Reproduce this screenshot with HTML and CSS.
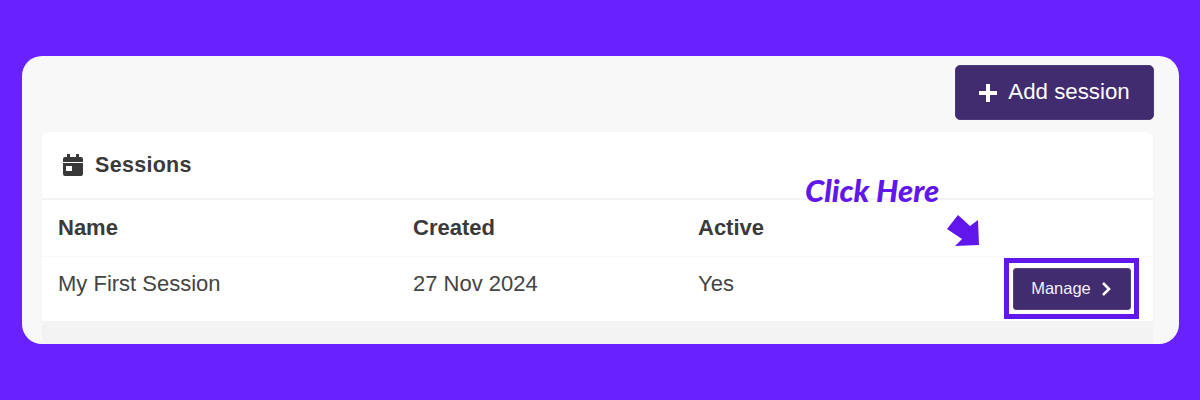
FILE: index.html
```html
<!DOCTYPE html>
<html lang="en">
<head>
<meta charset="utf-8">
<title>Sessions</title>
<link rel="stylesheet" href="styles.css">
</head>
<body>
<main class="panel">
  <div class="toolbar">
    <button class="btn-add">
      <svg class="plus" viewBox="0 0 22 22"><path d="M11 2v18M2 11h18"/></svg>
      <span>Add session</span>
    </button>
  </div>
  <section class="card">
    <header class="card-head">
      <svg class="cal" viewBox="0 0 20 22"><path d="M4 0h3v3h6V0h3v3h2a2 2 0 0 1 2 2v3H0V5a2 2 0 0 1 2-2h2zM0 9h20v11a2 2 0 0 1-2 2H2a2 2 0 0 1-2-2zm3 3v5h6v-5z"/></svg>
      <h2>Sessions</h2>
    </header>
    <div class="row row-head">
      <div>Name</div><div>Created</div><div>Active</div><div></div>
    </div>
    <div class="row row-body">
      <div class="cell">My First Session</div><div class="cell">27 Nov 2024</div><div class="cell">Yes</div>
      <div class="actions">
        <button class="btn-manage">
          <span>Manage</span>
          <svg class="chev" viewBox="0 0 10 16"><path d="M2 2l6 6-6 6"/></svg>
        </button>
      </div>
    </div>
  </section>
  <div class="card-foot"></div>
  <div class="note">Click Here</div>
  <svg class="arrow" viewBox="0 0 34 33"><polygon points="11,0 0,14 15,24 8,31 32,30 31,5 23,11"/></svg>
  <div class="highlight"></div>
</main>
</body>
</html>
```
FILE: styles.css
```css
* { box-sizing: border-box; }
html, body { margin: 0; height: 400px; overflow: hidden; }
body {
  background: #6a21ff;
  padding: 56px 21px 56px 22px;
  font-family: "Liberation Sans", Arial, sans-serif;
  color: #3a3a3a;
}
.panel {
  position: relative;
  display: flex;
  flex-direction: column;
  height: 288px;
  background: #f8f8f8;
  border-radius: 20px;
  padding: 9px 25px 0 20px;
  overflow: hidden;
}
.toolbar {
  display: flex;
  justify-content: flex-end;
  margin-bottom: 12px;
}
.btn-add {
  display: flex;
  align-items: center;
  justify-content: center;
  gap: 9px;
  width: 199px;
  height: 55px;
  background: #402c6e;
  border: 1px solid #4d3a7a;
  border-radius: 5px;
  color: #fff;
  font: 22.3px "Liberation Sans", Arial, sans-serif;
  padding: 0 2px 2px 0;
}
.plus { width: 22px; height: 22px; fill: none; stroke: #fff; stroke-width: 4; margin-top: 2px; }
.card {
  background: #fff;
  border-radius: 6px 6px 0 0;
  box-shadow: 0 0 1px #e6e6e6;
  margin-right: 1px;
}
.card-head {
  display: flex;
  align-items: center;
  gap: 12px;
  height: 68px;
  padding: 0 0 0 21px;
  border-bottom: 2px solid #f3f3f5;
}
.cal { width: 20px; height: 22px; fill: #383838; }
h2 { margin: 0; font-size: 21.5px; font-weight: 700; color: #3a3a3a; letter-spacing: 0.3px; }
.row {
  display: grid;
  grid-template-columns: 355px 285px 1fr 150px;
  align-items: center;
  padding-left: 16px;
  font-size: 22px;
}
.row-head {
  height: 57px;
  font-weight: 700;
  border-bottom: 1px solid #f8f8f8;
}
.row-body { height: 64px; color: #444; }
.cell { padding-bottom: 10px; }
.actions { display: flex; justify-content: flex-end; padding-right: 22px; }
.btn-manage {
  display: flex;
  align-items: center;
  gap: 10px;
  justify-content: center;
  width: 118px;
  height: 42px;
  background: #402c6e;
  border: 1px solid #54427f;
  border-radius: 3px;
  color: #f4f0ff;
  font: 16.5px "Liberation Sans", Arial, sans-serif;
  padding: 0 2px 2px 0;
}
.chev { width: 10px; height: 16px; fill: none; stroke: #fff; stroke-width: 2.6; margin-top: 2px; }
.card-foot {
  flex: 1;
  background: #f3f3f3;
  margin-right: 1px;
}
.note {
  position: absolute;
  left: 783px;
  top: 115px;
  font: italic 900 31px Lato, sans-serif;
  color: #6116ec;
  white-space: nowrap;
}
.arrow {
  position: absolute;
  left: 925px;
  top: 159px;
  width: 34px;
  height: 33px;
  fill: #6116ec;
}
.highlight {
  position: absolute;
  left: 982px;
  top: 202px;
  width: 135px;
  height: 61px;
  border: 5px solid #6116ec;
}
```
